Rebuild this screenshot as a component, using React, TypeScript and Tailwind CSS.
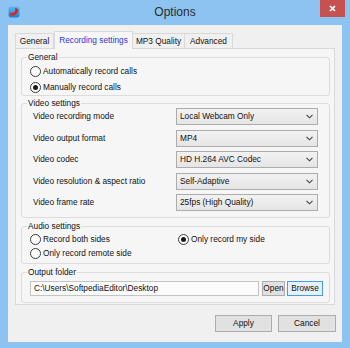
import React from "react";

function Radio({ checked, label }: { checked?: boolean; label: string }) {
  return (
    <div className="flex items-center gap-[2px]">
      <div className="w-[11px] h-[11px] rounded-full border border-[#3a3a3a] bg-white flex items-center justify-center">
        {checked && <div className="w-[5px] h-[5px] rounded-full bg-[#1a1a1a]" />}
      </div>
      <span>{label}</span>
    </div>
  );
}

function Select({ value }: { value: string }) {
  return (
    <div className="w-[142px] h-[17px] border border-[#acacac] bg-gradient-to-b from-[#f2f2f2] to-[#e5e5e5] flex items-center justify-between pl-[3px] pr-[4px]">
      <span>{value}</span>
      <svg width="7" height="5" viewBox="0 0 7 5">
        <polyline points="0.5,0.8 3.5,3.8 6.5,0.8" fill="none" stroke="#404040" strokeWidth="1.1" />
      </svg>
    </div>
  );
}

function Btn({ label, w, focus }: { label: string; w: string; focus?: boolean }) {
  return (
    <div
      className={`${w} h-[15px] flex items-center justify-center border ${
        focus ? "border-[#4a9be6] bg-[#e5f1fb]" : "border-[#adadad] bg-[#e1e1e1]"
      }`}
    >
      {label}
    </div>
  );
}

function Group({ title, children }: { title: string; children: React.ReactNode }) {
  return (
    <fieldset className="border border-[#dcdcdc] rounded-[3px] p-0 m-0 min-w-0">
      <legend className="ml-[5px] px-[1px] leading-[10px]">{title}</legend>
      {children}
    </fieldset>
  );
}

export default function App() {
  return (
    <div className="w-[350px] h-[348px] bg-[#8dc3f1] flex flex-col font-['Liberation_Sans',Arial,sans-serif] text-[8.3px] text-[#111111] leading-none">
      {/* Title bar */}
      <div className="h-[25px] grid grid-cols-[1fr_auto_1fr] items-start">
        <div className="pl-[8px] pt-[6px]">
          <svg width="12" height="12" viewBox="0 0 12 12">
            <defs>
              <linearGradient id="ib" x1="0" y1="0" x2="0" y2="1">
                <stop offset="0" stopColor="#5bb8f5" />
                <stop offset="1" stopColor="#1f7fd0" />
              </linearGradient>
            </defs>
            <rect x="0.5" y="0.5" width="11" height="11" rx="2.5" fill="url(#ib)" />
            <path
              d="M2 8.2 C1.4 7.2 2.4 6.4 3.2 6.9 L4.4 7.3 C5.6 6.9 6.8 5.8 7.4 4.6 L7.1 3.4 C6.7 2.6 7.6 1.7 8.6 2.3 L10.2 3.4 C10.8 4.4 9.6 7.4 6.8 9.1 C4.6 10.3 2.7 9.6 2 8.2 Z"
              fill="#e2231a"
            />
          </svg>
        </div>
        <div className="pt-[6px] text-[12px] text-[#2b2b2b]">Options</div>
        <div className="flex justify-end pr-[5px]">
          <div className="w-[25px] h-[17px] bg-[#c75050] flex items-center justify-center">
            <svg width="7" height="7" viewBox="0 0 7 7">
              <path d="M1 1 L6 6 M6 1 L1 6" stroke="white" strokeWidth="1.7" />
            </svg>
          </div>
        </div>
      </div>

      {/* Client area */}
      <div className="mx-[8px] h-[317px] bg-[#f0f0f0] flex flex-col pl-[7px] pr-[7px] pt-[6px]">
        {/* Tabs */}
        <div className="flex items-end h-[17px] relative z-10">
          <div className="w-[39px] h-[15px] border border-b-0 border-[#d9d9d9] bg-[#f0f0f0] flex items-center justify-center">
            General
          </div>
          <div className="w-[79px] h-[18px] -mb-[1px] border border-b-0 border-[#d9d9d9] bg-[#f6f6f6] flex items-center justify-center text-[#3535d0]">
            Recording settings
          </div>
          <div className="w-[52px] h-[15px] border border-b-0 border-l-0 border-[#d9d9d9] bg-[#f0f0f0] flex items-center justify-center">
            MP3 Quality
          </div>
          <div className="w-[48px] h-[15px] border border-b-0 border-l-0 border-[#d9d9d9] bg-[#f0f0f0] flex items-center justify-center">
            Advanced
          </div>
        </div>

        {/* Panel */}
        <div className="h-[257px] border border-[#d9d9d9] bg-[#f6f6f6] pl-[5px] pr-[4px] pt-[3px] flex flex-col">
          <Group title="General">
            <div className="pl-[8px] pt-[1px] flex flex-col">
              <div className="h-[16px] flex items-center">
                <Radio label="Automatically record calls" />
              </div>
              <div className="h-[16px] flex items-center">
                <Radio checked label="Manually record calls" />
              </div>
            </div>
          </Group>

          <div className="mt-[2px]">
            <Group title="Video settings">
              <div className="pl-[11px] pr-[11px] pb-[6px] flex flex-col gap-[4.5px]">
                {[
                  ["Video recording mode", "Local Webcam Only"],
                  ["Video output format", "MP4"],
                  ["Video codec", "HD H.264 AVC Codec"],
                  ["Video resolution & aspect ratio", "Self-Adaptive"],
                  ["Video frame rate", "25fps (High Quality)"],
                ].map(([l, v]) => (
                  <div key={l} className="flex items-center justify-between h-[17px]">
                    <span>{l}</span>
                    <Select value={v} />
                  </div>
                ))}
              </div>
            </Group>
          </div>

          <div className="mt-[3px]">
            <Group title="Audio settings">
              <div className="pl-[8px] pt-[1px] pb-[3px] grid grid-cols-[148px_1fr]">
                <div className="h-[14px] flex items-center">
                  <Radio label="Record both sides" />
                </div>
                <div className="h-[14px] flex items-center">
                  <Radio checked label="Only record my side" />
                </div>
                <div className="h-[14px] flex items-center">
                  <Radio label="Only record remote side" />
                </div>
              </div>
            </Group>
          </div>

          <div className="mt-[3px]">
            <Group title="Output folder">
              <div className="pl-[8px] pt-[4px] pb-[6px] flex items-center">
                <div className="w-[229px] h-[15px] border border-[#c4c4c4] bg-[#fbfbfb] flex items-center pl-[3px]">
                  C:\Users\SoftpediaEditor\Desktop
                </div>
                <div className="ml-[3px]">
                  <Btn label="Open" w="w-[23px]" />
                </div>
                <div className="ml-[2px]">
                  <Btn label="Browse" w="w-[36px]" focus />
                </div>
              </div>
            </Group>
          </div>
        </div>

        {/* Bottom buttons */}
        <div className="mt-[10px] flex justify-end gap-[6px] -mr-[1px]">
          <div className="w-[57px] h-[17px] border border-[#adadad] bg-[#e1e1e1] flex items-center justify-center">Apply</div>
          <div className="w-[58px] h-[17px] border border-[#adadad] bg-[#e1e1e1] flex items-center justify-center">Cancel</div>
        </div>
      </div>
    </div>
  );
}
